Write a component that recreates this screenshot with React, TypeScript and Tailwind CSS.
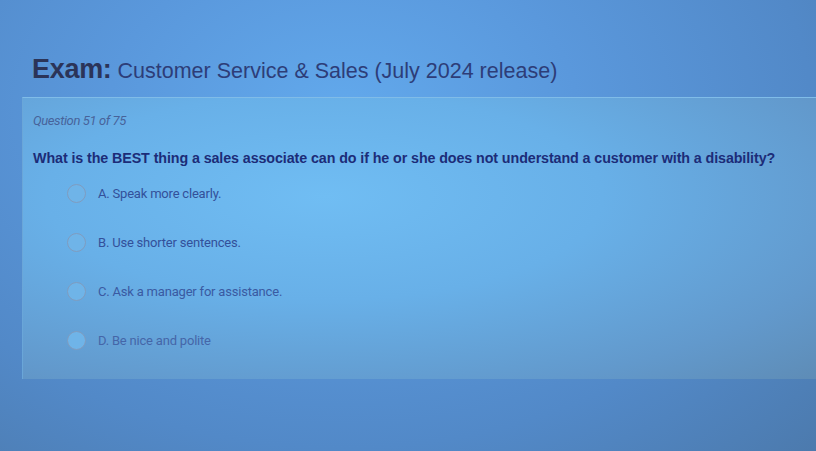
const OPTIONS = [
  { text: 'A. Speak more clearly.', cls: 'text-[#33509a]' },
  { text: 'B. Use shorter sentences.', cls: 'text-[#33509a]' },
  { text: 'C. Ask a manager for assistance.', cls: 'text-[#3a5aa2]' },
  { text: 'D. Be nice and polite', cls: 'text-[#4566a8]' },
];

export default function App() {
  return (
    <div className="w-[816px] h-[451px] overflow-hidden bg-[radial-gradient(ellipse_at_42%_25%,#62a9ec_0%,#5a98dc_35%,#5289c8_70%,#4c7aad_100%)] font-['Liberation_Sans',Arial,sans-serif]">
      {/* Header */}
      <div className="pt-[49px] pl-[32px] h-[97px] flex items-baseline gap-[6px]">
        <span className="text-[27px] font-bold text-[#2b3458] tracking-[-0.3px]">Exam:</span>
        <span className="text-[21.5px] text-[#2d3d78]">Customer Service &amp; Sales (July 2024 release)</span>
      </div>

      {/* Question card */}
      <div className="ml-[22px] h-[282px] border-t border-l border-t-[#80bce8] border-l-[#6aa6d8] bg-[radial-gradient(ellipse_at_38%_35%,#70bdf3_0%,#68b0e8_40%,#6299cc_78%,#5e8cb6_100%)] pl-[10px] pt-[13px]">
        <p className="text-[13px] italic text-[#47639a] tracking-[-0.4px] font-['Roboto',sans-serif]">Question 51 of 75</p>
        <p className="mt-[17px] text-[14.3px] font-bold text-[#1c2c78] tracking-[-0.1px]">
          What is the BEST thing a sales associate can do if he or she does not understand a customer with a disability?
        </p>

        <div className="mt-[16px] flex flex-col gap-[31px] pl-[34px]">
          {OPTIONS.map(o => (
            <div key={o.text} className="flex items-center gap-[12px] h-[18px]">
              <span className="w-[19px] h-[19px] rounded-full border-[1.5px] border-[#7f9cbf] bg-[#6fb4e8]" />
              <span className={`text-[13px] font-['Roboto',sans-serif] tracking-[-0.2px] ${o.cls}`}>{o.text}</span>
            </div>
          ))}
        </div>
      </div>
    </div>
  );
}
